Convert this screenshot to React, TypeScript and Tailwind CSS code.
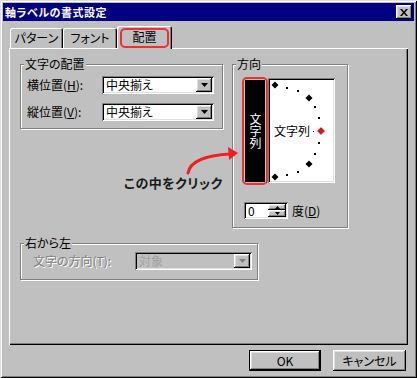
import React from 'react';

const raised =
  'shadow-[inset_-1px_-1px_#000,inset_1px_1px_#fff,inset_-2px_-2px_#808080,inset_2px_2px_#dfdfdf]';
const sunken =
  'shadow-[inset_1px_1px_#808080,inset_-1px_-1px_#fff,inset_2px_2px_#000,inset_-2px_-2px_#dfdfdf]';
const etched = 'border border-[#808080] shadow-[inset_1px_1px_#fff,1px_1px_#fff]';
const grayText = 'text-[#808080] [text-shadow:1px_1px_#fff]';

const DownArrow = ({ color = '#000' }: { color?: string }) => (
  <svg width="7" height="4" viewBox="0 0 7 4">
    <polygon points="0,0 7,0 3.5,4" fill={color} />
  </svg>
);

function Combo({ value, className, disabled }: { value: string; className: string; disabled?: boolean }) {
  return (
    <div
      className={`flex h-[18px] items-center justify-between p-[2px] ${sunken} ${className} ${
        disabled ? 'bg-[#c0c0c0]' : 'bg-white'
      }`}
    >
      <span className={`pl-[2px] text-[12px] leading-none ${disabled ? 'text-[#a0a0a0]' : 'text-black'}`}>{value}</span>
      <div className={`flex h-[14px] w-[16px] items-center justify-center bg-[#c0c0c0] ${raised}`}>
        <DownArrow color={disabled ? '#808080' : '#000'} />
      </div>
    </div>
  );
}

function Group({ label, className, children }: { label: string; className: string; children: React.ReactNode }) {
  return (
    <div className={`relative ${etched} ${className}`}>
      <span className="absolute -top-[8px] left-[3px] bg-[#c0c0c0] px-[1px] text-[12px] leading-[14px] text-black">
        {label}
      </span>
      {children}
    </div>
  );
}

const arcDots: [number, number, 'd' | 's' | 'r'][] = [
  [7, 7, 'd'],
  [19, 10, 's'],
  [30, 13, 's'],
  [41, 20, 'd'],
  [47, 29, 's'],
  [51, 40, 's'],
  [53, 53, 'r'],
  [51, 65, 's'],
  [47, 76, 's'],
  [41, 86, 'd'],
  [30, 94, 's'],
  [19, 97, 's'],
  [7, 99, 'd'],
];

function OrientationDial() {
  return (
    <div className={`relative ml-[3px] flex h-[105px] w-[67px] items-center bg-white ${sunken}`}>
      <svg className="absolute inset-0" width="67" height="105" viewBox="0 0 67 105">
        {arcDots.map(([x, y, t], i) =>
          t === 's' ? (
            <rect key={i} x={x - 1} y={y - 1} width="2" height="2" fill="#000" />
          ) : (
            <polygon
              key={i}
              points={`${x},${y - 3.5} ${x + 3.5},${y} ${x},${y + 3.5} ${x - 3.5},${y}`}
              fill={t === 'r' ? '#e01010' : '#000'}
              stroke={t === 'r' ? '#800000' : 'none'}
              strokeWidth="0.5"
            />
          )
        )}
        <rect x="45" y="53" width="1" height="1" fill="#000" />
      </svg>
      <span className="relative ml-[6px] mt-[1px] text-[12px] leading-none text-black">文字列</span>
    </div>
  );
}

export default function App() {
  return (
    <div className="h-[378px] w-[417px] bg-[#c0c0c0] font-['Noto_Sans_CJK_JP','Noto_Sans',sans-serif] [font-feature-settings:'palt'] shadow-[inset_1px_1px_#dfdfdf,inset_-1px_-1px_#000,inset_2px_2px_#fff,inset_-2px_-2px_#808080] p-[3px]">
      {/* title bar */}
      <div className="flex h-[18px] items-center justify-between bg-[#000080] pl-[2px] pr-[2px]">
        <span className="text-[11px] font-bold leading-none tracking-[0.5px] text-white">軸ラベルの書式設定</span>
        <div className={`flex h-[14px] w-[16px] items-center justify-center bg-[#c0c0c0] ${raised}`}>
          <svg width="8" height="7" viewBox="0 0 8 7">
            <path d="M0 0h2l2 2.5L6 0h2L5 3.5 8 7H6L4 4.5 2 7H0l3-3.5z" fill="#000" />
          </svg>
        </div>
      </div>

      {/* tabs */}
      <div className="ml-[6px] mt-[5px] flex h-[22px] items-end">
        <div className="ml-[1px] flex h-[20px] w-[53px] items-center justify-center rounded-t-[2px] shadow-[inset_1px_1px_#fff,inset_-1px_0_#000,inset_-2px_0_#808080]">
          <span className="text-[12px] leading-none text-black">パターン</span>
        </div>
        <div className="flex h-[20px] w-[54px] items-center justify-center rounded-t-[2px] shadow-[inset_1px_1px_#fff,inset_-1px_0_#000,inset_-2px_0_#808080]">
          <span className="text-[12px] leading-none text-black">フォント</span>
        </div>
        <div className="relative z-10 -mb-[1px] flex h-[23px] w-[55px] items-center justify-center rounded-t-[2px] bg-[#c0c0c0] shadow-[inset_1px_1px_#fff,inset_-1px_0_#000,inset_-2px_0_#808080]">
          <span className="mb-[2px] text-[12px] leading-none text-black">配置</span>
          <div className="absolute left-[3px] top-[2px] h-[20px] w-[49px] rounded-[5px] border-2 border-[#ee3030]" />
        </div>
      </div>

      {/* panel */}
      <div className="relative mx-[6px] h-[297px] pl-[11px] pt-[16px] shadow-[inset_1px_1px_#fff,inset_-1px_-1px_#000,inset_-2px_-2px_#808080]">
        <div className="flex items-start">
          <Group label="文字の配置" className="h-[65px] w-[203px]">
            <div className="flex flex-col gap-[9px] pl-[6px] pt-[11px]">
              <div className="flex h-[18px] items-center">
                <span className="w-[75px] text-[12px] leading-none text-black">
                  横位置(<span className="underline">H</span>):
                </span>
                <Combo value="中央揃え" className="w-[112px]" />
              </div>
              <div className="flex h-[18px] items-center">
                <span className="w-[75px] text-[12px] leading-none text-black">
                  縦位置(<span className="underline">V</span>):
                </span>
                <Combo value="中央揃え" className="w-[112px]" />
              </div>
            </div>
          </Group>

          <Group label="方向" className="ml-[9px] h-[164px] w-[116px]">
            <div className="flex flex-col pl-[10px] pt-[13px]">
              <div className="flex items-start">
                <div className="relative ml-[2px] mt-[2px]">
                  <div className="flex h-[102px] w-[20px] items-center justify-center bg-black">
                    <span className="text-[12px] leading-[12px] text-white [writing-mode:vertical-rl]">文字列</span>
                  </div>
                  <div className="absolute -inset-[3px] rounded-[5px] border-2 border-[#ee3030]" />
                </div>
                <OrientationDial />
              </div>
              <div className="ml-[1px] mt-[19px] flex items-center">
                <div className={`flex h-[17px] w-[44px] items-center justify-between bg-white p-[2px] ${sunken}`}>
                  <span className="pl-[2px] text-[12px] leading-none text-black">0</span>
                  <div className="flex flex-col">
                    <div className={`flex h-[6px] w-[18px] items-center justify-center bg-[#c0c0c0] ${raised}`}>
                      <svg width="5" height="3" viewBox="0 0 5 3">
                        <polygon points="2.5,0 5,3 0,3" fill="#000" />
                      </svg>
                    </div>
                    <div className={`flex h-[7px] w-[18px] items-center justify-center bg-[#c0c0c0] ${raised}`}>
                      <svg width="5" height="3" viewBox="0 0 5 3">
                        <polygon points="0,0 5,0 2.5,3" fill="#000" />
                      </svg>
                    </div>
                  </div>
                </div>
                <span className="ml-[4px] text-[12px] leading-none text-black">
                  度(<span className="underline">D</span>)
                </span>
              </div>
            </div>
          </Group>
        </div>

        <Group label="右から左" className="mt-[15px] h-[37px] w-[238px]">
          <div className="flex h-full items-start pl-[12px] pt-[8px]">
            <span className={`mt-[3px] w-[102px] text-[12px] leading-none ${grayText}`}>文字の方向(T):</span>
            <Combo value="対象" className="w-[117px]" disabled />
          </div>
        </Group>

        {/* annotation */}
        <span className="absolute left-[115px] top-[128px] text-[13px] font-bold leading-none tracking-[0.5px] text-[#1a1a1a]">
          この中をクリック
        </span>
        <svg className="absolute left-[170px] top-[95px]" width="65" height="35" viewBox="0 0 65 35">
          <path d="M9 30 C11 18, 28 12, 52 11" fill="none" stroke="#ee2020" strokeWidth="3" strokeLinecap="round" />
          <polygon points="59,10 49,4 50,17" fill="#ee2020" />
        </svg>
      </div>

      {/* buttons */}
      <div className="mr-[8px] mt-[5px] flex justify-end gap-[12px]">
        <div className="flex h-[21px] w-[72px] items-center justify-center border border-black bg-[#c0c0c0]">
          <div className={`flex h-full w-full items-center justify-center ${raised}`}>
            <span className="text-[12px] leading-none text-black">OK</span>
          </div>
        </div>
        <div className={`flex h-[21px] w-[73px] items-center justify-center bg-[#c0c0c0] ${raised}`}>
          <span className="text-[12px] leading-none text-black">キャンセル</span>
        </div>
      </div>
    </div>
  );
}
